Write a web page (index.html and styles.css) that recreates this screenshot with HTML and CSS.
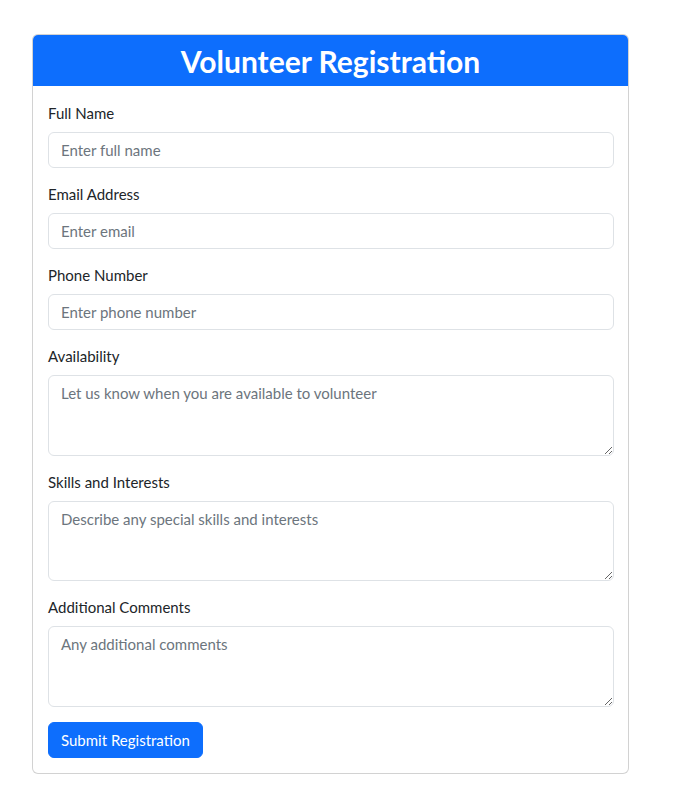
FILE: index.html
```html
<!DOCTYPE html>
<html lang="en">
<head>
<meta charset="utf-8">
<title>Volunteer Registration</title>
<link rel="stylesheet" href="styles.css">
</head>
<body>
<div class="page">
  <div class="card">
    <div class="card-header">
      <h2 class="title">Volunteer Registration</h2>
    </div>
    <form class="card-body">
      <div class="group">
        <label class="label" for="name">Full Name</label>
        <input class="control" id="name" type="text" placeholder="Enter full name">
      </div>
      <div class="group">
        <label class="label" for="email">Email Address</label>
        <input class="control" id="email" type="email" placeholder="Enter email">
      </div>
      <div class="group">
        <label class="label" for="phone">Phone Number</label>
        <input class="control" id="phone" type="tel" placeholder="Enter phone number">
      </div>
      <div class="group">
        <label class="label" for="avail">Availability</label>
        <textarea class="control area" id="avail" rows="3" placeholder="Let us know when you are available to volunteer"></textarea>
      </div>
      <div class="group">
        <label class="label" for="skills">Skills and Interests</label>
        <textarea class="control area" id="skills" rows="3" placeholder="Describe any special skills and interests"></textarea>
      </div>
      <div class="group">
        <label class="label" for="comments">Additional Comments</label>
        <textarea class="control area" id="comments" rows="3" placeholder="Any additional comments"></textarea>
      </div>
      <button class="btn" type="submit">Submit Registration</button>
    </form>
  </div>
</div>
</body>
</html>
```
FILE: styles.css
```css
* { box-sizing: border-box; }
body {
  margin: 0;
  background: #fff;
  font-family: Lato, "Liberation Sans", sans-serif;
  font-size: 15px;
  line-height: 22px;
  color: #212529;
}
.page {
  padding: 34px 0 0 32px;
}
.card {
  width: 597px;
  border: 1px solid rgba(0, 0, 0, 0.175);
  border-radius: 6px;
  overflow: hidden;
  background: #fff;
}
.card-header {
  background: #0d6efd;
  height: 52px;
  margin: -1px -1px 0;
  border-radius: 6px 6px 0 0;
  display: flex;
  align-items: center;
  justify-content: center;
}
.title {
  margin: 0;
  color: #fff;
  font-size: 30px;
  font-weight: 700;
  line-height: 40px;
  padding-top: 1px;
}
.card-body {
  display: flex;
  flex-direction: column;
  padding: 16px 14px 15px 15px;
  margin: 0;
}
.group {
  display: flex;
  flex-direction: column;
  margin-bottom: 15px;
}
.label {
  margin-bottom: 8px;
  color: #212529;
}
.control {
  display: block;
  width: 100%;
  height: 36px;
  padding: 6px 12px;
  font-family: inherit;
  font-size: 15px;
  line-height: 22px;
  color: #212529;
  background: #fff;
  border: 1px solid #dee2e6;
  border-radius: 6px;
  outline: none;
}
.control::placeholder { color: #6c757d; opacity: 1; }
.area {
  height: 80.6px;
  resize: vertical;
}
.btn {
  align-self: flex-start;
  height: 36px;
  padding: 6px 12px;
  font-family: inherit;
  font-size: 15px;
  line-height: 22px;
  color: #fff;
  background: #0d6efd;
  border: 1px solid #0d6efd;
  border-radius: 6px;
  cursor: pointer;
}
```
